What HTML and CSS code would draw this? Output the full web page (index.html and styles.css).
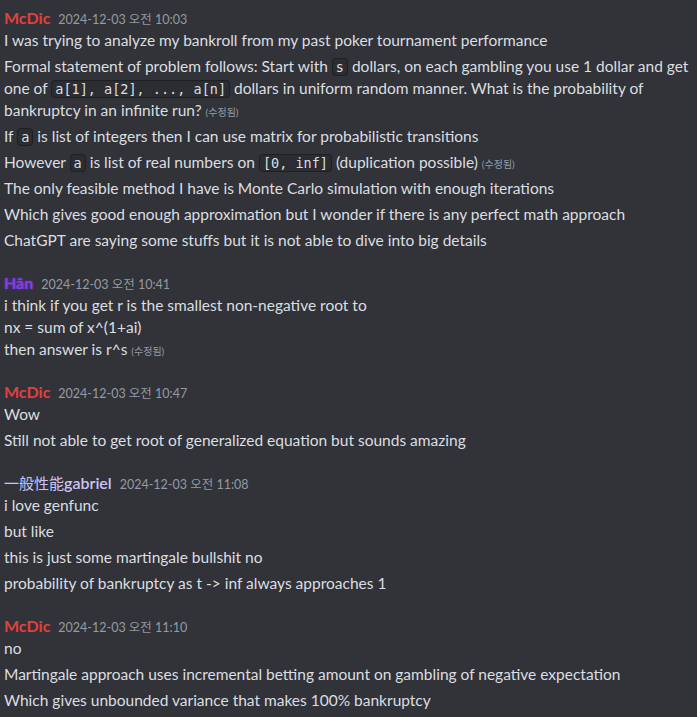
FILE: index.html
```html
<!DOCTYPE html>
<html lang="ko">
<head>
<meta charset="utf-8">
<link rel="stylesheet" href="styles.css">
</head>
<body>
<div class="chat">
  <div class="group">
    <div class="header"><span class="name mcdic">McDic</span><span class="time">2024-12-03 오전 10:03</span></div>
    <div class="msg">I was trying to analyze my bankroll from my past poker tournament performance</div>
    <div class="msg">Formal statement of problem follows: Start with <code>s</code> dollars, on each gambling you use 1 dollar and get one of <code>a[1], a[2], ..., a[n]</code> dollars in uniform random manner. What is the probability of bankruptcy in an infinite run? <span class="edited">(수정됨)</span></div>
    <div class="msg">If <code>a</code> is list of integers then I can use matrix for probabilistic transitions</div>
    <div class="msg">However <code>a</code> is list of real numbers on <code>[0, inf]</code> (duplication possible) <span class="edited">(수정됨)</span></div>
    <div class="msg">The only feasible method I have is Monte Carlo simulation with enough iterations</div>
    <div class="msg">Which gives good enough approximation but I wonder if there is any perfect math approach</div>
    <div class="msg">ChatGPT are saying some stuffs but it is not able to dive into big details</div>
  </div>
  <div class="group">
    <div class="header"><span class="name han">Hân</span><span class="time">2024-12-03 오전 10:41</span></div>
    <div class="msg">i think if you get r is the smallest non-negative root to<br>nx = sum of x^(1+ai)<br>then answer is r^s <span class="edited">(수정됨)</span></div>
  </div>
  <div class="group">
    <div class="header"><span class="name mcdic">McDic</span><span class="time">2024-12-03 오전 10:47</span></div>
    <div class="msg">Wow</div>
    <div class="msg">Still not able to get root of generalized equation but sounds amazing</div>
  </div>
  <div class="group">
    <div class="header"><span class="name gabriel"><span class="cjk">一般性能</span>gabriel</span><span class="time">2024-12-03 오전 11:08</span></div>
    <div class="msg">i love genfunc</div>
    <div class="msg">but like</div>
    <div class="msg">this is just some martingale bullshit no</div>
    <div class="msg">probability of bankruptcy as t -&gt; inf always approaches 1</div>
  </div>
  <div class="group">
    <div class="header"><span class="name mcdic">McDic</span><span class="time">2024-12-03 오전 11:10</span></div>
    <div class="msg">no</div>
    <div class="msg">Martingale approach uses incremental betting amount on gambling of negative expectation</div>
    <div class="msg">Which gives unbounded variance that makes 100% bankruptcy</div>
  </div>
</div>
</body>
</html>
```
FILE: styles.css
```css
html, body {
  margin: 0;
  padding: 0;
  background: #313338;
}
body {
  font-family: "Lato", "Noto Sans CJK KR", sans-serif;
  color: #dbdee1;
  font-size: 15.5px;
  line-height: 22px;
}
.chat {
  padding: 5px 4px 0 4px;
}
.group {
  margin-bottom: 17px;
}
.header {
  padding-top: 2px;
  height: 22px;
  display: flex;
  align-items: baseline;
  white-space: nowrap;
}
.msg {
  padding: 2px 0;
}
.header + .msg {
  padding-top: 0;
}
.name {
  font-weight: 700;
  font-size: 16px;
  line-height: 22px;
}
.mcdic { color: #e23f3f; }
.han {
  color: #8a3df0;
  text-shadow: 0 0 3px rgba(140, 60, 240, 0.6);
}
.gabriel {
  color: #cdc4f4;
  font-weight: 600;
}
.cjk {
  font-weight: 400;
  font-size: 15px;
}
.time {
  margin-left: 8px;
  font-size: 12.5px;
  line-height: 22px;
  color: #949ba4;
  font-weight: 400;
}
.edited {
  font-size: 10px;
  line-height: 10px;
  color: #949ba4;
}
code {
  font-family: "DejaVu Sans Mono", "Liberation Mono", monospace;
  font-size: 13.5px;
  line-height: 16px;
  background: #2b2d31;
  border: 1px solid #1e1f22;
  border-radius: 4px;
  padding: 0 3px;
}
```
